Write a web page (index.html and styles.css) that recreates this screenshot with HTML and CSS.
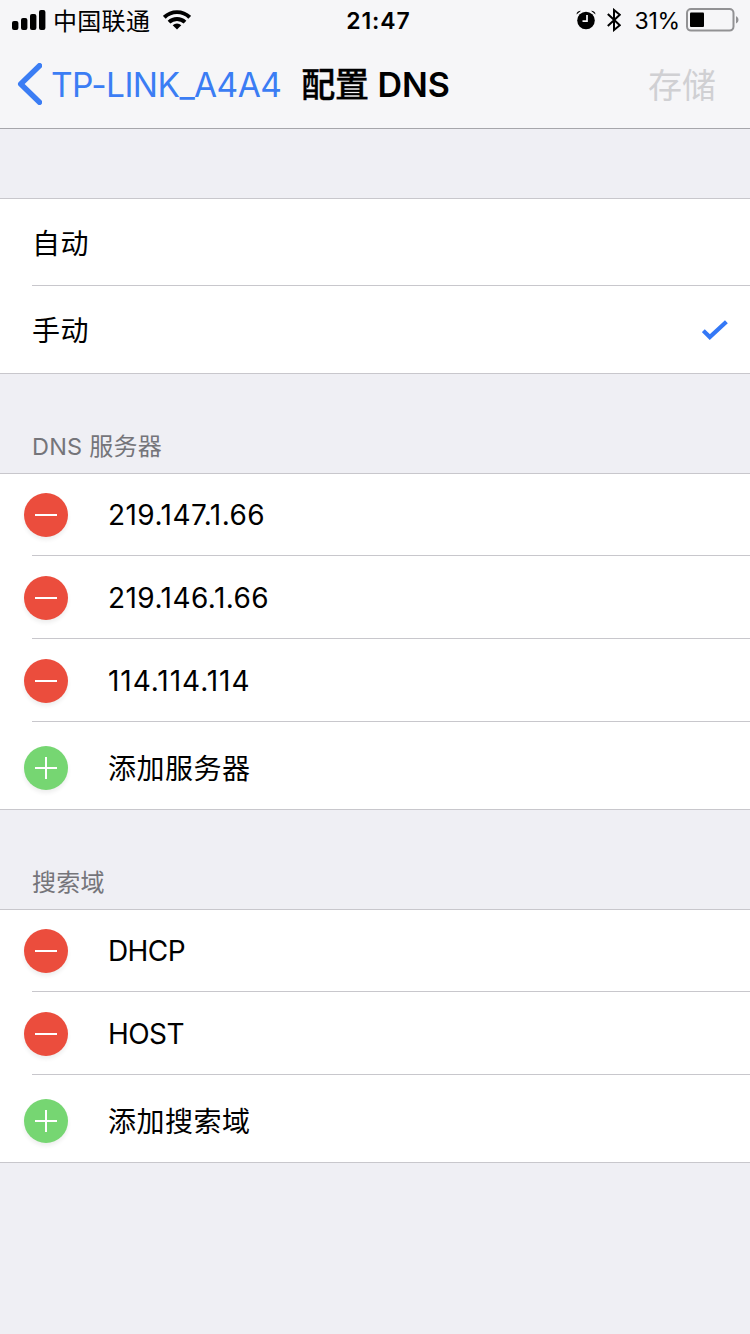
FILE: index.html
```html
<!DOCTYPE html>
<html lang="zh-CN">
<head>
<meta charset="utf-8">
<title>配置 DNS</title>
<link rel="stylesheet" href="styles.css">
</head>
<body>
<header class="header">
  <div class="status">
    <div class="status-left">
      <svg class="signal" width="34" height="20" viewBox="0 0 34 20"><rect x="0" y="11" width="6.4" height="9" rx="2"/><rect x="9" y="8" width="6.4" height="12" rx="2"/><rect x="18" y="4" width="6.4" height="16" rx="2"/><rect x="27" y="0" width="6.4" height="20" rx="2"/></svg>
      <span class="carrier">中国联通</span>
      <svg class="wifi" width="28" height="20" viewBox="0 0 28 20"><g fill="none" stroke="#000" stroke-width="3.9"><path d="M1.3 7.3a18.2 18.2 0 0 1 25.4 0"/><path d="M6 12.2a11.6 11.6 0 0 1 16 0"/></g><path d="M14 19.6l-4.3-4.3a6.2 6.2 0 0 1 8.600 0z"/></svg>
    </div>
    <time class="clock">21:47</time>
    <div class="status-right">
      <svg class="alarm" width="20" height="20" viewBox="0 0 20 20"><circle cx="10" cy="10.500" r="8.800"/><path d="M.5 4.400C.7 2 2.300.8 5 .8zM19.500 4.400C19.300 2 17.700.8 15 .8z"/><path d="M11 5v6.200H6.500" fill="none" stroke="#f6f6f8" stroke-width="1.700"/></svg>
      <svg class="bluetooth" width="14" height="24" viewBox="0 0 14 24"><path d="M.8 6l12 11.300L7 22v-20l5.800 4.800L.8 18" fill="none" stroke="#000" stroke-width="2"/></svg>
      <span class="percent">31%</span>
      <svg class="battery" width="54" height="24" viewBox="0 0 54 24"><rect x="1" y="1" width="46.500" height="21.600" rx="4" fill="none" stroke="#929294" stroke-width="2"/><rect x="4" y="4.500" width="14" height="14.500" rx="1"/><path d="M50 8.300c3.300 1.200 3.300 6 0 7.200z" fill="#929294"/></svg>
    </div>
  </div>
  <nav class="nav">
    <svg class="chevron" width="25" height="42" viewBox="0 0 25 42"><path d="M22.500 2.700L3.700 21l18.800 18.300" fill="none" stroke="#3b7df4" stroke-width="5.400" stroke-linecap="round" stroke-linejoin="round"/></svg>
    <span class="back">TP-LINK_A4A4</span>
    <h1 class="title"><span class="title-cjk">配置</span> DNS</h1>
    <span class="save">存储</span>
  </nav>
</header>
<main>
  <section class="group mode">
    <div class="row tall first"><span class="label">自动</span></div>
    <div class="row tall last"><span class="label">手动</span>
      <svg class="check" width="26" height="20" viewBox="0 0 26 20"><path d="M1.300 10.700l6.500 6.300L24.400 1.700" fill="none" stroke="#3478f6" stroke-width="4.200"/></svg></div>
  </section>
  <h2 class="heading"><span class="heading-latin">DNS</span> 服务器</h2>
  <section class="group">
    <div class="row first"><i class="dot minus"></i><span class="value ip">219.147.1.66</span></div>
    <div class="row"><i class="dot minus"></i><span class="value ip">219.146.1.66</span></div>
    <div class="row"><i class="dot minus"></i><span class="value ip ones">114.114.114</span></div>
    <div class="row tall last"><i class="dot plus"></i><span class="label add">添加服务器</span></div>
  </section>
  <h2 class="heading">搜索域</h2>
  <section class="group">
    <div class="row first"><i class="dot minus"></i><span class="value">DHCP</span></div>
    <div class="row"><i class="dot minus"></i><span class="value">HOST</span></div>
    <div class="row tall last"><i class="dot plus"></i><span class="label add">添加搜索域</span></div>
  </section>
</main>
</body>
</html>
```
FILE: styles.css
```css
* { box-sizing: border-box; }
body {
  margin: 0;
  min-height: 1334px;
  background: #efeff4;
  color: #000;
  font-family: Inter, "Noto Sans CJK SC", sans-serif;
  white-space: nowrap;
}
svg { display: block; flex: none; }
.header { height: 129px; background: #f6f6f8; border-bottom: 1px solid #a6a6ab; }
.status { height: 40px; display: grid; grid-template-columns: 1fr auto 1fr; align-items: center; font-size: 24px; line-height: 38px; }
.status-left { display: flex; align-items: center; padding-left: 12px; }
.carrier { font-family: "Noto Sans CJK SC", sans-serif; font-weight: 400; margin-left: 7px; letter-spacing: .3px; }
.wifi { margin-left: 13px; }
.clock { font-size: 23px; font-weight: 600; letter-spacing: .9px; padding: 2px 0 0 7px; }
.status-right { display: flex; align-items: center; justify-content: flex-end; padding-right: 10px; }
.bluetooth { margin-left: 11px; }
.percent { margin-left: 13px; font-size: 23px; letter-spacing: -.2px; padding-top: 2px; }
.battery { margin-left: 6px; }
.alarm { margin-right: 1px; margin-left: 1px; }
.status-right .bluetooth { margin-left: 10px; margin-right: 0; }
.nav { height: 90px; display: flex; align-items: center; padding: 0 34px 2px 17px; font-size: 34px; line-height: 88px; }
.back { color: #3b7df4; margin-left: 9px; font-size: 33.5px; letter-spacing: -.6px; padding-top: 1px; }
.title { margin: 0 0 0 20px; font-size: 34px; font-weight: 600; letter-spacing: -.1px; padding-top: 1px; }
.title-cjk { font-weight: 500; -webkit-text-stroke: .4px #000; }
.save { margin-left: auto; color: #d0d0d3; font-weight: 400; padding-top: 3px; }
.group { background: #fff; border-top: 1px solid #c8c7cc; }
.mode { margin-top: 69px; }
.row { height: 83px; display: flex; align-items: center; position: relative; padding: 0 22px 0 24px; }
.row::after { content: ""; position: absolute; left: 32px; right: 0; bottom: 0; height: 1px; background: #c8c7cc; }
.row.first { height: 82px; }
.row.tall { height: 88px; }
.row.tall.first { height: 87px; }
.row.last::after { left: 0; }
.label { font-size: 28px; font-weight: 400; letter-spacing: .5px; padding-bottom: 2px; }
.label.add { padding: 1px 0 0; }
.mode .label { margin-left: 8px; }
.value { font-size: 28px; letter-spacing: -.6px; }
.ip { letter-spacing: .45px; }
.ones { letter-spacing: .95px; }
.first .value { padding-bottom: 1px; }
.check { margin-left: auto; }
.dot { width: 44px; height: 44px; flex: none; border-radius: 50%; margin-right: 40px; box-shadow: 0 3px 4px rgba(0, 0, 0, .07); }
.minus { background: linear-gradient(#fff, #fff) center / 22px 2px no-repeat, #eb4d3d; }
.plus { margin-top: 4px; background: linear-gradient(#fff, #fff) center / 22px 2px no-repeat, linear-gradient(#fff, #fff) center / 2px 22px no-repeat, #76d672; }
.heading { height: 99px; margin: 0; padding: 55px 32px 0; font-size: 24px; line-height: 36px; font-weight: 400; letter-spacing: .2px; color: #75757a; }
.heading-latin { font-size: 23.5px; }
```
